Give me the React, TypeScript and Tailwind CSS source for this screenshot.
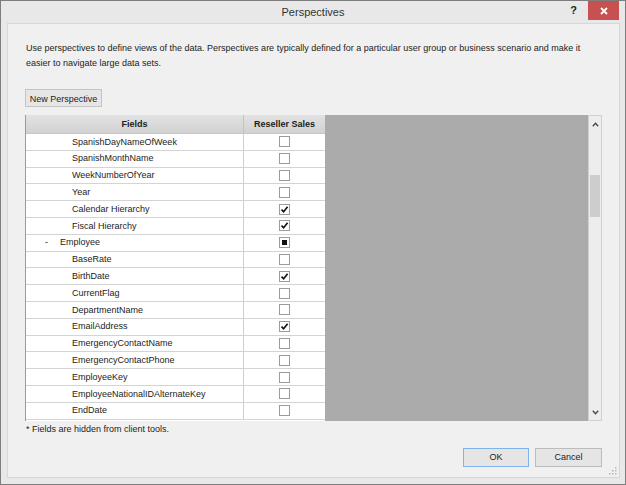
import React from 'react';

type CheckState = 'off' | 'on' | 'mixed';

type FieldRow = {
  name: string;
  state: CheckState;
  table?: boolean;
};

const rows: FieldRow[] = [
  { name: 'SpanishDayNameOfWeek', state: 'off' },
  { name: 'SpanishMonthName', state: 'off' },
  { name: 'WeekNumberOfYear', state: 'off' },
  { name: 'Year', state: 'off' },
  { name: 'Calendar Hierarchy', state: 'on' },
  { name: 'Fiscal Hierarchy', state: 'on' },
  { name: 'Employee', state: 'mixed', table: true },
  { name: 'BaseRate', state: 'off' },
  { name: 'BirthDate', state: 'on' },
  { name: 'CurrentFlag', state: 'off' },
  { name: 'DepartmentName', state: 'off' },
  { name: 'EmailAddress', state: 'on' },
  { name: 'EmergencyContactName', state: 'off' },
  { name: 'EmergencyContactPhone', state: 'off' },
  { name: 'EmployeeKey', state: 'off' },
  { name: 'EmployeeNationalIDAlternateKey', state: 'off' },
  { name: 'EndDate', state: 'off' },
];

const CheckBox = ({ state }: { state: CheckState }) => (
  <div className="w-[11px] h-[11px] border border-[#9b9b9b] bg-white flex items-center justify-center">
    {state === 'on' && (
      <svg width="9" height="9" viewBox="0 0 9 9">
        <path d="M1.5 4.6 L3.6 6.8 L7.6 1.8" fill="none" stroke="#111" strokeWidth="1.6" />
      </svg>
    )}
    {state === 'mixed' && <div className="w-[5px] h-[5px] bg-[#111]" />}
  </div>
);

const Chevron = ({ up }: { up?: boolean }) => (
  <svg width="7" height="5" viewBox="0 0 7 5">
    <path d={up ? 'M0.8 4.2 L3.5 1.2 L6.2 4.2' : 'M0.8 0.8 L3.5 3.8 L6.2 0.8'} fill="none" stroke="#444" strokeWidth="1.3" />
  </svg>
);

const App = () => {
  return (
    <div className="w-[626px] h-[485px] bg-[#e8e8e8] border border-[#7d7d7d] flex flex-col font-['Liberation_Sans',Arial,sans-serif] text-[#1c1c1c] overflow-hidden">
      {/* title bar */}
      <div className="h-[22px] flex items-stretch shrink-0">
        <div className="flex-1" />
        <div className="flex items-center text-[11px] text-[#333]">Perspectives</div>
        <div className="flex-1 flex justify-end items-start">
          <div className="h-[19px] flex items-center text-[11px] font-bold text-[#222] mr-[11px]">?</div>
          <div className="w-[31px] h-[19px] bg-[#c75050] flex items-center justify-center mr-[6px]">
            <svg width="8" height="8" viewBox="0 0 8 8">
              <path d="M1 1 L7 7 M7 1 L1 7" stroke="#fff" strokeWidth="1.8" />
            </svg>
          </div>
        </div>
      </div>

      {/* client area */}
      <div className="flex-1 pl-[6px] pr-[5px] pb-[6px] flex">
        <div className="flex-1 bg-[#f0f0f0] border border-[#d7d7d7] flex flex-col pl-[17px] pr-[17px] pt-[17px] relative">
          <p className="text-[9px] leading-[15px] pl-[1px]">
            Use perspectives to define views of the data. Perspectives are typically defined for a particular user group or business scenario and make it
            <br />
            easier to navigate large data sets.
          </p>

          <div className="mt-[18px]">
            <button className="w-[77px] h-[18px] border border-[#c4c4c4] bg-[#e6e6e6] text-[9px] leading-[16px] pt-[1px] flex items-center justify-center">
              New Perspective
            </button>
          </div>

          {/* grid */}
          <div className="mt-[8px] h-[306px] flex">
            <div className="w-[300px] flex flex-col border-l border-[#9a9a9a] bg-white">
              <div className="h-[19px] flex bg-gradient-to-b from-[#e2e2e2] to-[#d2d2d2] border-b border-[#c6c6c6] text-[9px] font-bold shrink-0">
                <div className="w-[218px] flex items-center justify-center border-r border-[#c2c2c2] pt-[1px]">Fields</div>
                <div className="flex-1 flex items-center justify-center pt-[1px]">Reseller Sales</div>
              </div>
              {rows.map((row) => (
                <div key={row.name} className="h-[16.8px] flex border-b border-[#d4d4d4] text-[9px] shrink-0">
                  <div className="w-[218px] flex items-center border-r border-[#cfcfcf] pt-[1px]">
                    {row.table ? (
                      <>
                        <span className="w-[34px] pl-[19px] shrink-0">-</span>
                        <span>{row.name}</span>
                      </>
                    ) : (
                      <span className="pl-[46px]">{row.name}</span>
                    )}
                  </div>
                  <div className="flex-1 flex items-center justify-center">
                    <CheckBox state={row.state} />
                  </div>
                </div>
              ))}
            </div>
            <div className="flex-1 bg-[#ababab]" />
            <div className="w-[14px] bg-[#ededed] border border-[#d0d0d0] flex flex-col items-center">
              <div className="h-[16px] flex items-center justify-center">
                <Chevron up />
              </div>
              <div className="mt-[43px] w-[10px] h-[42px] bg-[#cdcdcd]" />
              <div className="flex-1" />
              <div className="h-[16px] flex items-center justify-center">
                <Chevron />
              </div>
            </div>
          </div>

          <p className="text-[9px] leading-[12px] mt-[2px] pl-[1px]">* Fields are hidden from client tools.</p>

          <div className="flex justify-end gap-[6px] mt-[13px]">
            <button className="w-[66px] h-[19px] border border-[#7eb4ea] bg-[#e5e5e5] text-[9px] flex items-center justify-center">OK</button>
            <button className="w-[67px] h-[19px] border border-[#bcbcbc] bg-[#e5e5e5] text-[9px] flex items-center justify-center">Cancel</button>
          </div>

          <svg className="absolute right-[2px] bottom-[2px]" width="8" height="8" viewBox="0 0 8 8">
            <rect x="6" y="0" width="1.5" height="1.5" fill="#b5b5b5" />
            <rect x="3" y="3" width="1.5" height="1.5" fill="#b5b5b5" />
            <rect x="6" y="3" width="1.5" height="1.5" fill="#b5b5b5" />
            <rect x="0" y="6" width="1.5" height="1.5" fill="#b5b5b5" />
            <rect x="3" y="6" width="1.5" height="1.5" fill="#b5b5b5" />
            <rect x="6" y="6" width="1.5" height="1.5" fill="#b5b5b5" />
          </svg>
        </div>
      </div>
    </div>
  );
};

export default App;
